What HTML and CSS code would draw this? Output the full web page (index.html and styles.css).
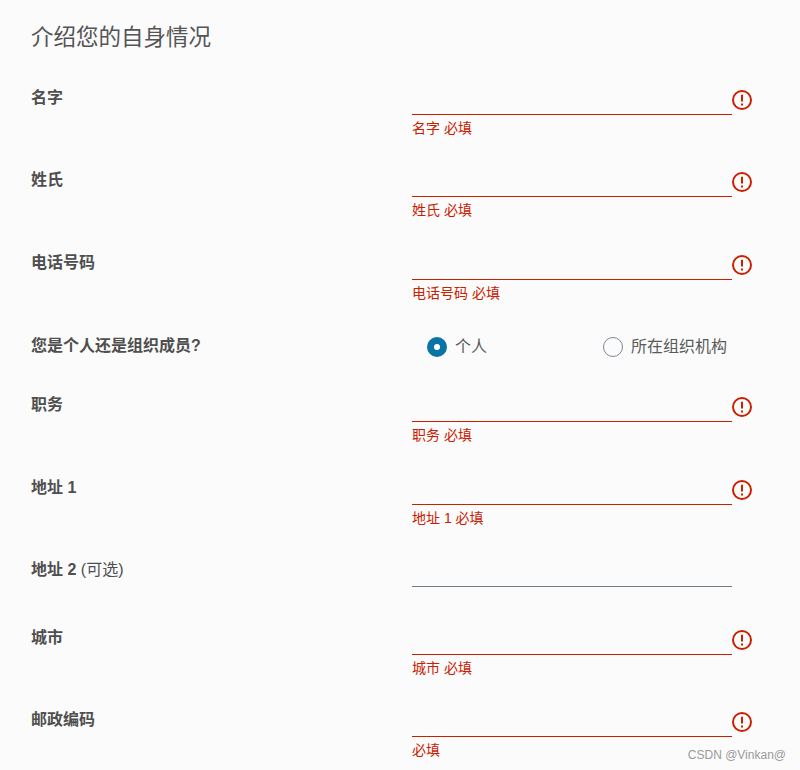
FILE: index.html
```html
<!DOCTYPE html>
<html lang="zh-CN">
<head>
<meta charset="UTF-8">
<meta name="viewport" content="width=device-width, initial-scale=1.0">
<title>介绍您的自身情况</title>
<link rel="stylesheet" href="styles.css">
</head>
<body>

<form class="form">
    <h2 class="title">介绍您的自身情况</h2>

    <div class="row">
        <label class="row-label" for="firstName">名字</label>
        <div class="field">
            <div class="field-line">
                <input class="text-input error" type="text" id="firstName">
                <svg class="alert" viewBox="0 0 20 20"><circle cx="10" cy="10" r="9"/><path d="M10 4.8v6.6M10 13.4v2"/></svg>
            </div>
            <div class="helper">名字 必填</div>
        </div>
    </div>

    <div class="row">
        <label class="row-label" for="lastName">姓氏</label>
        <div class="field">
            <div class="field-line">
                <input class="text-input error" type="text" id="lastName">
                <svg class="alert" viewBox="0 0 20 20"><circle cx="10" cy="10" r="9"/><path d="M10 4.8v6.6M10 13.4v2"/></svg>
            </div>
            <div class="helper">姓氏 必填</div>
        </div>
    </div>

    <div class="row row-wide">
        <label class="row-label" for="phone">电话号码</label>
        <div class="field">
            <div class="field-line">
                <input class="text-input error" type="text" id="phone">
                <svg class="alert" viewBox="0 0 20 20"><circle cx="10" cy="10" r="9"/><path d="M10 4.8v6.6M10 13.4v2"/></svg>
            </div>
            <div class="helper">电话号码 必填</div>
        </div>
    </div>

    <div class="row radio-row">
        <div class="row-label">您是个人还是组织成员?</div>
        <div class="radios">
            <label class="radio"><input type="radio" name="kind" checked> 个人</label>
            <label class="radio"><input type="radio" name="kind"> 所在组织机构</label>
        </div>
    </div>

    <div class="row">
        <label class="row-label" for="job">职务</label>
        <div class="field">
            <div class="field-line">
                <input class="text-input error" type="text" id="job">
                <svg class="alert" viewBox="0 0 20 20"><circle cx="10" cy="10" r="9"/><path d="M10 4.8v6.6M10 13.4v2"/></svg>
            </div>
            <div class="helper">职务 必填</div>
        </div>
    </div>

    <div class="row row-wide">
        <label class="row-label" for="address1">地址 1</label>
        <div class="field">
            <div class="field-line">
                <input class="text-input error" type="text" id="address1">
                <svg class="alert" viewBox="0 0 20 20"><circle cx="10" cy="10" r="9"/><path d="M10 4.8v6.6M10 13.4v2"/></svg>
            </div>
            <div class="helper">地址 1 必填</div>
        </div>
    </div>

    <div class="row row-plain">
        <label class="row-label" for="address2">地址 2 <span class="optional">(可选)</span></label>
        <div class="field">
            <div class="field-line">
                <input class="text-input" type="text" id="address2">
            </div>
        </div>
    </div>

    <div class="row">
        <label class="row-label" for="city">城市</label>
        <div class="field">
            <div class="field-line">
                <input class="text-input error" type="text" id="city">
                <svg class="alert" viewBox="0 0 20 20"><circle cx="10" cy="10" r="9"/><path d="M10 4.8v6.6M10 13.4v2"/></svg>
            </div>
            <div class="helper">城市 必填</div>
        </div>
    </div>

    <div class="row last">
        <label class="row-label" for="zip">邮政编码</label>
        <div class="field">
            <div class="field-line">
                <input class="text-input error" type="text" id="zip">
                <svg class="alert" viewBox="0 0 20 20"><circle cx="10" cy="10" r="9"/><path d="M10 4.8v6.6M10 13.4v2"/></svg>
            </div>
            <div class="helper">必填</div>
        </div>
    </div>
</form>

<div class="watermark">CSDN @Vinkan@</div>

</body>
</html>
```

FILE: styles.css
```css
html, body {
    height: 770px;
    overflow: hidden;
}
body {
    margin: 0;
    background-color: #fbfbfc;
    color: #4f4f4f;
    font-family: "Liberation Sans", "Noto Sans CJK SC", sans-serif;
}
.form {
    padding-left: 31px;
}
.title {
    margin: 0 0 16px;
    padding-top: 23px;
    font-size: 22.5px;
    line-height: 30px;
    font-weight: 400;
    color: #555;
}
.row {
    display: grid;
    grid-template-columns: 381px 345px;
    padding-top: 16px;
}
.row-wide {
    padding-top: 17px;
}
.row-plain {
    padding-bottom: 22px;
}
.row-label {
    padding-top: 3px;
    font-size: 16px;
    line-height: 20px;
    font-weight: 700;
    color: #4f4f4f;
}
.optional {
    font-size: 16px;
    font-weight: 400;
}
.field-line {
    display: flex;
    align-items: center;
    height: 30px;
}
.text-input {
    width: 320px;
    height: 30px;
    padding: 0;
    border: none;
    border-bottom: 1px solid #6f7d8a;
    background: transparent;
    box-sizing: border-box;
    outline: none;
}
.text-input.error {
    border-bottom-color: #c92100;
}
.alert {
    width: 20px;
    height: 20px;
    flex: none;
    fill: none;
    stroke: #c92100;
    stroke-width: 2;
}
.helper {
    padding: 4px 0 14px;
    font-size: 14px;
    line-height: 18px;
    color: #c92100;
}
.last .helper {
    padding-bottom: 0;
}
.radio-row {
    height: 60px;
    padding-top: 0;
    align-items: center;
}
.radio-row .row-label {
    padding-top: 0;
}
.radios {
    display: grid;
    grid-template-columns: 176px 150px;
    padding-left: 15px;
}
.radio {
    display: flex;
    align-items: center;
    gap: 8px;
    padding-bottom: 2px;
    font-size: 16px;
    color: #5a5a5a;
}
.radio input {
    appearance: none;
    width: 20px;
    height: 20px;
    margin: 2px 0 -2px;
    border: 1px solid #7b8a95;
    border-radius: 50%;
    background: transparent;
    box-sizing: border-box;
}
.radio input:checked {
    border: 7.5px solid #0a74a6;
    background: #fff;
}
.watermark {
    position: absolute;
    right: 14px;
    top: 748px;
    font-size: 12px;
    line-height: 15px;
    color: #9a9a9a;
}
```
